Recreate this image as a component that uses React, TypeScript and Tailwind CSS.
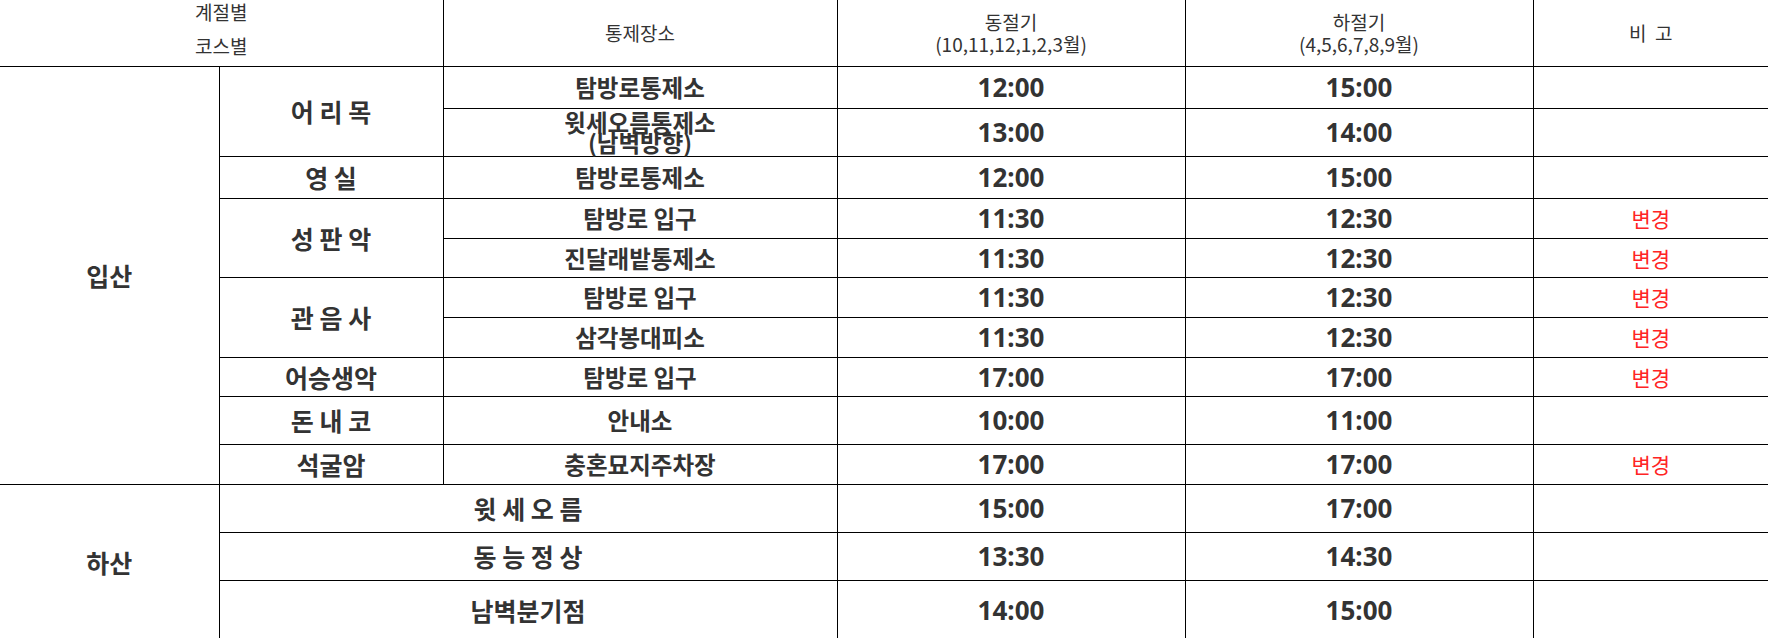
import React from 'react'

type Row = {
  place: React.ReactNode
  winter: string
  summer: string
  note?: string
  h: string
}

const cell = 'p-0 border-b border-r border-black text-center align-middle'
const placeCls = `${cell} text-[23.5px] font-bold leading-[28px]`
const timeCls = `${cell} text-[26px] font-bold leading-[28px] font-['Noto_Sans','Noto_Sans_CJK_KR',sans-serif]`
const courseCls = `${cell} text-[25px] font-bold leading-[28px]`
const noteCls = 'p-0 border-b border-black text-center align-middle text-[21px] font-normal leading-[28px] text-[#ff2424]'

function Times({ r }: { r: Row }) {
  return (
    <>
      <td className={placeCls}>{r.place}</td>
      <td className={timeCls}>{r.winter}</td>
      <td className={timeCls}>{r.summer}</td>
      <td className={noteCls}>{r.note}</td>
    </>
  )
}

export default function App() {
  const up: Row[] = [
    { place: '탐방로통제소', winter: '12:00', summer: '15:00', h: 'h-[42px]' },
    {
      place: (
        <div className="leading-[20px]">
          <div>윗세오름통제소</div>
          <div>(남벽방향)</div>
        </div>
      ),
      winter: '13:00',
      summer: '14:00',
      h: 'h-[48px]',
    },
    { place: '탐방로통제소', winter: '12:00', summer: '15:00', h: 'h-[42px]' },
    { place: '탐방로 입구', winter: '11:30', summer: '12:30', note: '변경', h: 'h-[40px]' },
    { place: '진달래밭통제소', winter: '11:30', summer: '12:30', note: '변경', h: 'h-[39px]' },
    { place: '탐방로 입구', winter: '11:30', summer: '12:30', note: '변경', h: 'h-[40px]' },
    { place: '삼각봉대피소', winter: '11:30', summer: '12:30', note: '변경', h: 'h-[40px]' },
    { place: '탐방로 입구', winter: '17:00', summer: '17:00', note: '변경', h: 'h-[39px]' },
    { place: '안내소', winter: '10:00', summer: '11:00', h: 'h-[48px]' },
    { place: '충혼묘지주차장', winter: '17:00', summer: '17:00', note: '변경', h: 'h-[40px]' },
  ]

  const down = [
    { name: '윗 세 오 름', winter: '15:00', summer: '17:00', h: 'h-[48px]' },
    { name: '동 능 정 상', winter: '13:30', summer: '14:30', h: 'h-[48px]' },
    { name: '남벽분기점', winter: '14:00', summer: '15:00', h: 'h-[60px]' },
  ]

  return (
    <div className="min-h-screen bg-white text-[#333] font-['Noto_Sans_CJK_KR','Noto_Sans',sans-serif]">
      <table className="table-fixed border-collapse w-[1768px]">
        <colgroup>
          <col className="w-[219px]" />
          <col className="w-[224px]" />
          <col className="w-[394px]" />
          <col className="w-[348px]" />
          <col className="w-[348px]" />
          <col className="w-[235px]" />
        </colgroup>
        <thead>
          <tr className="h-[66px]">
            <th colSpan={2} className="p-0 border-b border-r border-black font-normal text-[19px] align-top">
              <div className="flex flex-col items-center gap-[12px] pt-[1px] leading-[22px]">
                <span>계절별</span>
                <span>코스별</span>
              </div>
            </th>
            <th className="p-0 border-b border-r border-black font-normal text-[19px] leading-[22px]">
              통제장소
            </th>
            <th className="p-0 border-b border-r border-black font-normal text-[19px] leading-[22px]">
              <div>동절기</div>
              <div>(10,11,12,1,2,3월)</div>
            </th>
            <th className="p-0 border-b border-r border-black font-normal text-[19px] leading-[22px]">
              <div>하절기</div>
              <div>(4,5,6,7,8,9월)</div>
            </th>
            <th className="p-0 border-b border-black font-normal text-[19px] leading-[22px]">
              비&nbsp;&nbsp;고
            </th>
          </tr>
        </thead>
        <tbody>
          <tr className={up[0].h}>
            <td rowSpan={10} className={courseCls}>입산</td>
            <td rowSpan={2} className={courseCls}>어 리 목</td>
            <Times r={up[0]} />
          </tr>
          <tr className={up[1].h}>
            <Times r={up[1]} />
          </tr>
          <tr className={up[2].h}>
            <td className={courseCls}>영 실</td>
            <Times r={up[2]} />
          </tr>
          <tr className={up[3].h}>
            <td rowSpan={2} className={courseCls}>성 판 악</td>
            <Times r={up[3]} />
          </tr>
          <tr className={up[4].h}>
            <Times r={up[4]} />
          </tr>
          <tr className={up[5].h}>
            <td rowSpan={2} className={courseCls}>관 음 사</td>
            <Times r={up[5]} />
          </tr>
          <tr className={up[6].h}>
            <Times r={up[6]} />
          </tr>
          <tr className={up[7].h}>
            <td className={courseCls}>어승생악</td>
            <Times r={up[7]} />
          </tr>
          <tr className={up[8].h}>
            <td className={courseCls}>돈 내 코</td>
            <Times r={up[8]} />
          </tr>
          <tr className={up[9].h}>
            <td className={courseCls}>석굴암</td>
            <Times r={up[9]} />
          </tr>

          {down.map((d, i) => (
            <tr key={d.name} className={d.h}>
              {i === 0 && (
                <td rowSpan={3} className={courseCls}>하산</td>
              )}
              <td colSpan={2} className={courseCls}>{d.name}</td>
              <td className={timeCls}>{d.winter}</td>
              <td className={timeCls}>{d.summer}</td>
              <td className={noteCls}></td>
            </tr>
          ))}
        </tbody>
      </table>
    </div>
  )
}
